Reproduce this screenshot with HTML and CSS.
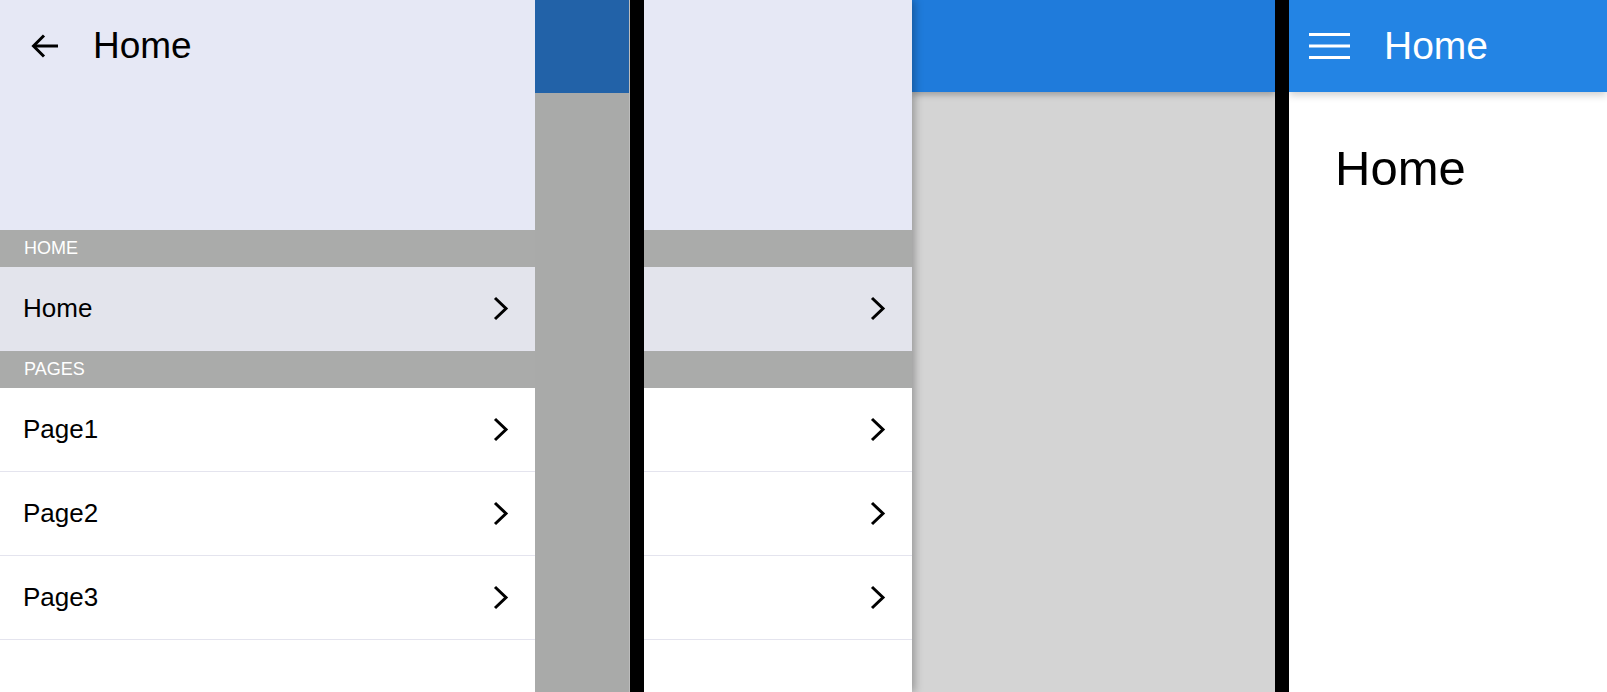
FILE: index.html
```html
<!DOCTYPE html>
<html lang="en">
<head>
<meta charset="utf-8">
<title>Drawer navigation</title>
<link rel="stylesheet" href="styles.css">
</head>
<body>
<div class="screens">
  <section class="screen screen-a">
    <nav class="drawer drawer-full">
      <header class="drawer-head">
        <div class="drawer-toolbar">
          <svg class="icon-back" width="28" height="24" viewBox="0 0 28 24"><polyline points="13,1.5 2.5,12 13,22.5" fill="none" stroke="#000" stroke-width="3"/><line x1="3" y1="12" x2="27" y2="12" stroke="#000" stroke-width="3"/></svg>
          <span class="drawer-title">Home</span>
        </div>
      </header>
      <div class="section-label">HOME</div>
      <div class="row row-active"><span class="row-label">Home</span><svg class="chev" width="17" height="25" viewBox="0 0 17 25"><polyline points="2,2 13,12.5 2,23" fill="none" stroke="#000" stroke-width="3"/></svg></div>
      <div class="section-label">PAGES</div>
      <div class="row"><span class="row-label">Page1</span><svg class="chev" width="17" height="25" viewBox="0 0 17 25"><polyline points="2,2 13,12.5 2,23" fill="none" stroke="#000" stroke-width="3"/></svg></div>
      <div class="row"><span class="row-label">Page2</span><svg class="chev" width="17" height="25" viewBox="0 0 17 25"><polyline points="2,2 13,12.5 2,23" fill="none" stroke="#000" stroke-width="3"/></svg></div>
      <div class="row"><span class="row-label">Page3</span><svg class="chev" width="17" height="25" viewBox="0 0 17 25"><polyline points="2,2 13,12.5 2,23" fill="none" stroke="#000" stroke-width="3"/></svg></div>
    </nav>
    <div class="scrim">
      <div class="scrim-bar"></div>
    </div>
  </section>
  <div class="bezel bezel-a"></div>
  <section class="screen screen-b">
    <nav class="drawer drawer-partial">
      <header class="drawer-head"></header>
      <div class="section-label"></div>
      <div class="row row-active"><svg class="chev" width="17" height="25" viewBox="0 0 17 25"><polyline points="2,2 13,12.5 2,23" fill="none" stroke="#000" stroke-width="3"/></svg></div>
      <div class="section-label"></div>
      <div class="row"><svg class="chev" width="17" height="25" viewBox="0 0 17 25"><polyline points="2,2 13,12.5 2,23" fill="none" stroke="#000" stroke-width="3"/></svg></div>
      <div class="row"><svg class="chev" width="17" height="25" viewBox="0 0 17 25"><polyline points="2,2 13,12.5 2,23" fill="none" stroke="#000" stroke-width="3"/></svg></div>
      <div class="row"><svg class="chev" width="17" height="25" viewBox="0 0 17 25"><polyline points="2,2 13,12.5 2,23" fill="none" stroke="#000" stroke-width="3"/></svg></div>
    </nav>
    <div class="app-dim">
      <div class="app-dim-bar"></div>
    </div>
  </section>
  <div class="bezel bezel-b"></div>
  <section class="screen screen-c">
    <header class="app-bar">
      <svg class="icon-menu" width="41" height="26" viewBox="0 0 41 26"><rect x="0" y="0" width="41" height="3" fill="#fff"/><rect x="0" y="11.5" width="41" height="3" fill="#fff"/><rect x="0" y="23" width="41" height="3" fill="#fff"/></svg>
      <span class="app-bar-title">Home</span>
    </header>
    <main class="page">
      <h1 class="page-title">Home</h1>
    </main>
  </section>
</div>
</body>
</html>
```

FILE: styles.css
```css
html, body {
  margin: 0;
  padding: 0;
  height: 100%;
}

body {
  font-family: "Liberation Sans", Arial, sans-serif;
  background: #000;
  overflow: hidden;
}

.screens {
  display: flex;
  width: 1607px;
  height: 692px;
}

.screen {
  display: flex;
  height: 100%;
  overflow: hidden;
  background: #fff;
  flex: none;
}

.screen-a { width: 630px; }
.screen-b { width: 631px; }
.screen-c { width: 318px; flex-direction: column; }

.bezel {
  background: #000;
  flex: none;
}
.bezel-a { width: 14px; }
.bezel-b { width: 14px; }

/* Drawer */
.drawer {
  display: flex;
  flex-direction: column;
  background: #fff;
  flex: none;
}

.drawer-full { width: 535px; }

.drawer-partial {
  width: 268px;
  position: relative;
  z-index: 2;
  box-shadow: 3px 0 8px rgba(0, 0, 0, 0.28);
}

.drawer-head {
  height: 230px;
  flex: none;
  box-sizing: border-box;
  background: #e6e8f5;
  padding: 24px 0 0 31px;
}

.drawer-toolbar {
  display: flex;
  align-items: center;
  gap: 34px;
  height: 44px;
}

.icon-back { display: block; flex: none; }

.drawer-title {
  font-size: 37px;
  line-height: 44px;
  color: #000;
}

.section-label {
  height: 37px;
  flex: none;
  line-height: 37px;
  background: #aaabaa;
  color: #fff;
  font-size: 18px;
  padding-left: 24px;
}

.row {
  height: 83px;
  flex: none;
  border-bottom: 1px solid #e4e4ee;
  display: flex;
  align-items: center;
  justify-content: space-between;
  padding: 0 25px 0 23px;
  font-size: 26px;
  color: #000;
}

.drawer-partial .row { justify-content: flex-end; }

.row-active { background: #e3e4ec; }

.chev { display: block; flex: none; }

/* Dim scrim over app in first screen */
.scrim {
  flex: 1;
  display: flex;
  flex-direction: column;
  background: #a9aaa9;
  border-right: 1px solid #bcbcbc;
}

.scrim-bar {
  height: 93px;
  background: #2262a8;
}

/* Second screen app (lighter dim) */
.app-dim {
  flex: 1;
  display: flex;
  flex-direction: column;
  background: #d4d4d4;
}

.app-dim-bar {
  height: 92px;
  background: #1f7bdb;
  position: relative;
  z-index: 1;
  box-shadow: 0 3px 6px rgba(0, 0, 0, 0.25);
}

/* Third screen */
.app-bar {
  height: 92px;
  flex: none;
  box-sizing: border-box;
  background: #2384e4;
  display: flex;
  align-items: center;
  gap: 34px;
  padding-left: 20px;
  color: #fff;
  position: relative;
  z-index: 1;
  box-shadow: 0 3px 8px rgba(0, 0, 0, 0.2);
}

.icon-menu { display: block; flex: none; }

.app-bar-title {
  font-size: 39px;
  line-height: 44px;
}

.page {
  padding: 48px 0 0 46px;
}

.page-title {
  margin: 0;
  font-size: 49px;
  line-height: 56px;
  font-weight: normal;
  color: #000;
}
```
